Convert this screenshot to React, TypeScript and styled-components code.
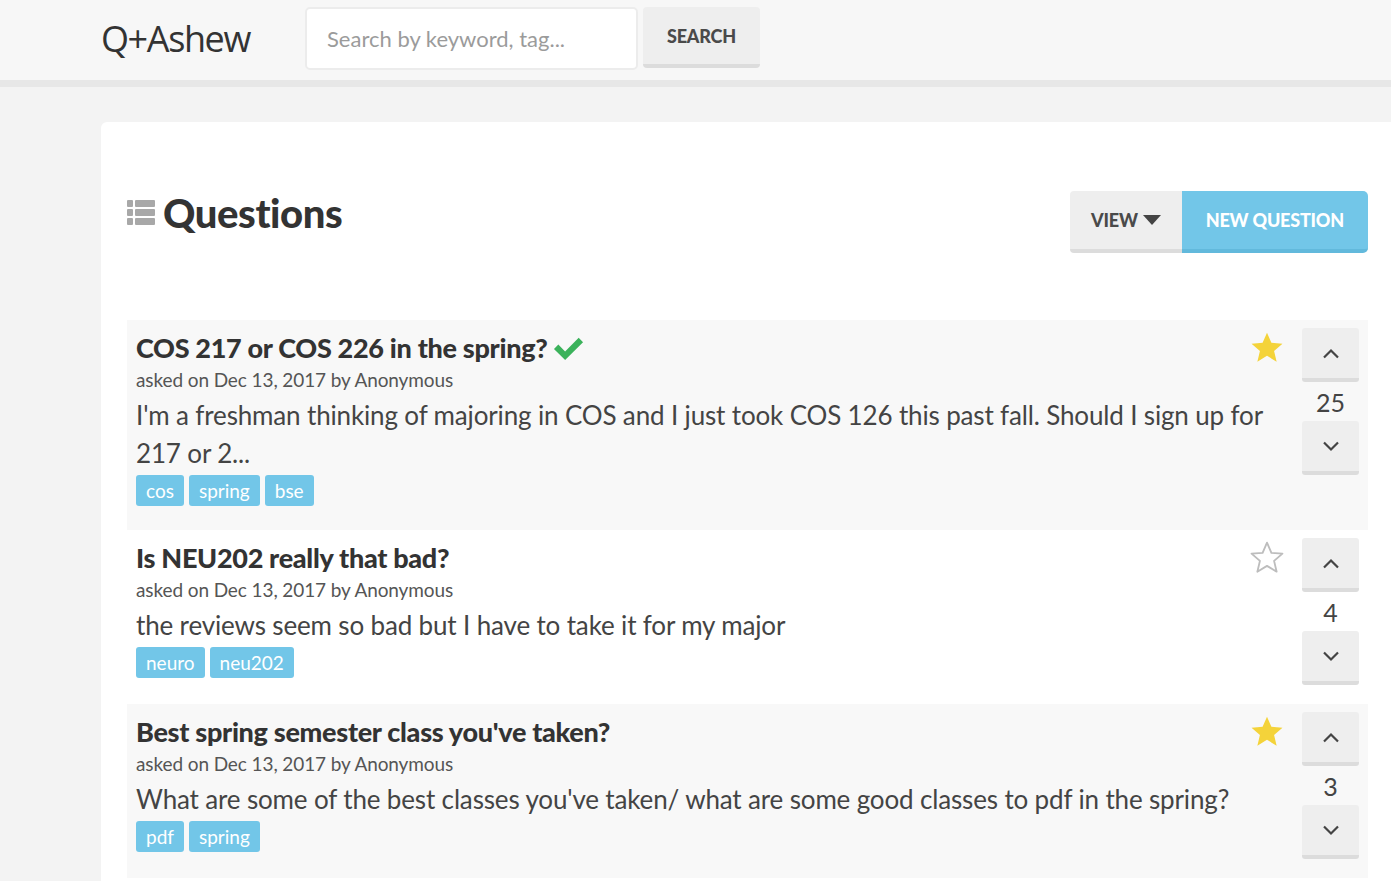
import React from "react";
import styled, { createGlobalStyle } from "styled-components";

const GlobalStyle = createGlobalStyle`
  html, body {
    margin: 0;
    padding: 0;
    background: #f3f3f3;
    font-family: Lato, "Open Sans", sans-serif;
    color: #444;
    overflow-x: hidden;
  }
`;

type Question = {
  title: string;
  answered?: boolean;
  body: string;
  tags: string[];
  starred: boolean;
  votes: number;
  shaded: boolean;
};

const questions: Question[] = [
  {
    title: "COS 217 or COS 226 in the spring?",
    answered: true,
    body: "I'm a freshman thinking of majoring in COS and I just took COS 126 this past fall. Should I sign up for 217 or 2...",
    tags: ["cos", "spring", "bse"],
    starred: true,
    votes: 25,
    shaded: true,
  },
  {
    title: "Is NEU202 really that bad?",
    body: "the reviews seem so bad but I have to take it for my major",
    tags: ["neuro", "neu202"],
    starred: false,
    votes: 4,
    shaded: false,
  },
  {
    title: "Best spring semester class you've taken?",
    body: "What are some of the best classes you've taken/ what are some good classes to pdf in the spring?",
    tags: ["pdf", "spring"],
    starred: true,
    votes: 3,
    shaded: true,
  },
];

export default function App() {
  return (
    <>
      <GlobalStyle />
      <Header>
        <Logo>Q+Ashew</Logo>
        <SearchInput placeholder="Search by keyword, tag..." />
        <GrayButton>Search</GrayButton>
      </Header>
      <Main>
        <Card>
          <CardHead>
            <Heading>
              <ListIcon />
              Questions
            </Heading>
            <ButtonGroup>
              <GrayButton $tall>
                View <Caret />
              </GrayButton>
              <BlueButton>New Question</BlueButton>
            </ButtonGroup>
          </CardHead>
          <List>
            {questions.map((q) => (
              <Item key={q.title} $shaded={q.shaded}>
                <Content>
                  <Title>
                    {q.title}
                    {q.answered && <Check />}
                  </Title>
                  <Meta>asked on Dec 13, 2017 by Anonymous</Meta>
                  <Body>{q.body}</Body>
                  <Tags>
                    {q.tags.map((t) => (
                      <Tag key={t}>{t}</Tag>
                    ))}
                  </Tags>
                </Content>
                <StarBox>
                  <Star filled={q.starred} />
                </StarBox>
                <Votes>
                  <VoteButton>
                    <Chevron up />
                  </VoteButton>
                  <Count>{q.votes}</Count>
                  <VoteButton>
                    <Chevron />
                  </VoteButton>
                </Votes>
              </Item>
            ))}
          </List>
        </Card>
      </Main>
    </>
  );
}

function ListIcon() {
  return (
    <svg width="28" height="26" viewBox="0 0 28 26" style={{ marginRight: 8 }}>
      {[0, 9, 18].map((y) => (
        <g key={y} fill="#a8a8a8">
          <rect x="0" y={y} width="6" height="7" rx="1" />
          <rect x="8" y={y} width="20" height="7" rx="1" />
        </g>
      ))}
    </svg>
  );
}

function Caret() {
  return (
    <svg width="18" height="11" viewBox="0 0 18 11" style={{ marginLeft: 5 }}>
      <path d="M0 0h18L9 10z" fill="#444" />
    </svg>
  );
}

function Check() {
  return (
    <svg width="31" height="26" viewBox="0 0 32 26" style={{ marginLeft: 5 }}>
      <path d="M1 14l4.5-4.5 7 7L26.5 2.5 31 7 12.5 25.5z" fill="#3bb25b" />
    </svg>
  );
}

function Star({ filled }: { filled: boolean }) {
  return (
    <svg width="34" height="33" viewBox="0 0 24 23">
      <path
        d="M12 1l3.1 7.2 7.8.6-5.9 5.1 1.8 7.6L12 17.4 5.2 21.5 7 13.9 1.1 8.8l7.8-.6z"
        fill={filled ? "#f4d33a" : "none"}
        stroke={filled ? "none" : "#bdbdbd"}
        strokeWidth="1.3"
        strokeLinejoin="round"
      />
    </svg>
  );
}

function Chevron({ up }: { up?: boolean }) {
  return (
    <svg width="18" height="11" viewBox="0 0 18 11">
      <path
        d={up ? "M2 9.5L9 2.5l7 7" : "M2 1.5l7 7 7-7"}
        fill="none"
        stroke="#444"
        strokeWidth="2.2"
      />
    </svg>
  );
}

const Header = styled.header`
  background: #f7f7f7;
  border-bottom: 7px solid #e7e7e7;
  display: flex;
  align-items: flex-start;
  padding: 7px 0 0 101px;
  box-sizing: border-box;
  height: 87px;
`;

const Logo = styled.div`
  font-family: "Open Sans", sans-serif;
  font-size: 36px;
  color: #333;
  letter-spacing: -1.4px;
  width: 204px;
  margin-top: 8px;
  line-height: 48px;
`;

const SearchInput = styled.input`
  width: 333px;
  height: 63px;
  box-sizing: border-box;
  border: 2px solid #ececec;
  border-radius: 5px;
  background: #fff;
  padding: 0 20px;
  font-family: Lato, sans-serif;
  font-size: 22px;
  color: #444;
  outline: none;
  &::placeholder {
    color: #9b9b9b;
  }
`;

const GrayButton = styled.button<{ $tall?: boolean }>`
  height: ${(p) => (p.$tall ? 62 : 61)}px;
  margin-left: ${(p) => (p.$tall ? 0 : 5)}px;
  padding: 0 ${(p) => (p.$tall ? 21 : 24)}px;
  box-sizing: border-box;
  border: none;
  border-bottom: 4px solid #dcdcdc;
  border-radius: ${(p) => (p.$tall ? "4px 0 0 4px" : "4px")};
  background: #eeeeee;
  color: #4a4a4a;
  font-family: Lato, sans-serif;
  font-weight: 900;
  font-size: 18px;
  text-transform: uppercase;
  display: flex;
  align-items: center;
  letter-spacing: -0.2px;
`;

const BlueButton = styled.button`
  height: 62px;
  padding: 0 24px;
  box-sizing: border-box;
  border: none;
  border-bottom: 4px solid #62b9dc;
  border-radius: 0 5px 5px 0;
  background: #72c6e8;
  color: #fff;
  font-family: Lato, sans-serif;
  font-weight: 900;
  font-size: 18px;
  text-transform: uppercase;
  letter-spacing: -0.2px;
`;

const Main = styled.main`
  padding: 35px 0 0 101px;
`;

const Card = styled.section`
  width: 1293px;
  background: #fff;
  border-radius: 6px 0 0 0;
  padding: 69px 26px 0;
  box-sizing: border-box;
  min-height: 800px;
`;

const CardHead = styled.div`
  display: flex;
  justify-content: space-between;
  align-items: center;
  height: 62px;
  margin-bottom: 67px;
`;

const Heading = styled.h1`
  margin: 0;
  display: flex;
  align-items: center;
  font-family: Lato, sans-serif;
  font-size: 40px;
  font-weight: 900;
  color: #333;
  letter-spacing: -0.4px;
  margin-top: -18px;
`;

const ButtonGroup = styled.div`
  display: flex;
`;

const List = styled.div`
  display: flex;
  flex-direction: column;
`;

const Item = styled.article<{ $shaded: boolean }>`
  position: relative;
  display: flex;
  align-items: flex-start;
  background: ${(p) => (p.$shaded ? "#f8f8f8" : "#fff")};
  padding: 8px 0 0 9px;
  min-height: 174px;
  box-sizing: border-box;
  &:first-child {
    min-height: 210px;
  }
`;

const Content = styled.div`
  flex: 1;
  padding: 4px 8px 0 0;
`;

const Title = styled.h2`
  margin: 0;
  display: flex;
  align-items: center;
  font-family: Lato, sans-serif;
  font-size: 27px;
  font-weight: 900;
  color: #333;
  letter-spacing: -0.3px;
  line-height: 32px;
`;

const Meta = styled.div`
  font-size: 19px;
  color: #555;
  line-height: 32px;
  letter-spacing: -0.1px;
`;

const Body = styled.p`
  margin: 0;
  font-size: 26px;
  line-height: 38px;
  color: #444;
  letter-spacing: -0.15px;
`;

const Tags = styled.div`
  display: flex;
  gap: 5px;
  margin-top: 3px;
`;

const Tag = styled.span`
  background: #72c6e8;
  color: #fff;
  border-radius: 3px;
  font-size: 19px;
  line-height: 31px;
  padding: 0 10px;
`;

const StarBox = styled.div`
  position: absolute;
  top: 11px;
  right: 84px;
  width: 34px;
  height: 33px;
`;

const Votes = styled.div`
  width: 57px;
  margin-right: 9px;
  display: flex;
  flex-direction: column;
  align-items: center;
`;

const VoteButton = styled.button`
  width: 57px;
  height: 54px;
  box-sizing: border-box;
  border: none;
  border-bottom: 4px solid #dcdcdc;
  border-radius: 3px;
  background: #eeeeee;
  display: flex;
  align-items: center;
  justify-content: center;
`;

const Count = styled.div`
  font-size: 25px;
  color: #444;
  line-height: 37px;
  padding-top: 2px;
`;
